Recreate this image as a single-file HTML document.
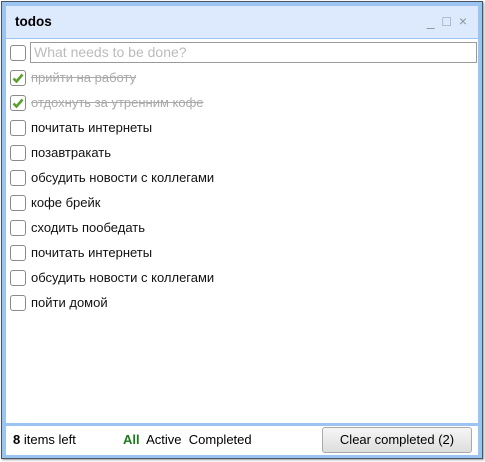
<!DOCTYPE html>
<html><head><meta charset="utf-8"><style>
body{margin:0;width:485px;height:462px;background:#fff;font-family:"Liberation Sans",Arial,sans-serif;position:relative;overflow:hidden}
.win{position:absolute;left:1px;top:1px;width:480px;height:456px;border:1px solid #4a5563;background:#9cc4f2;box-shadow:1px 1px 2px rgba(0,0,0,.4)}
.title{position:absolute;left:4px;top:4px;width:472px;height:32px;background:#dde9fc}
.title b{position:absolute;left:9px;top:8px;font-size:13.5px;color:#000}
.ctl{position:absolute;right:9px;top:7px;color:#8a949e;font-size:14px;letter-spacing:2px}
.content{position:absolute;left:4px;top:37px;width:472px;height:384px;background:#fff}
.footer{position:absolute;left:4px;top:424px;width:472px;height:29px;background:#fff;font-size:13px}
.cb{position:absolute;left:4px;width:14px;height:14px;border:1px solid #8a8a8a;border-radius:3px;background:#fff}
.row{position:absolute;left:0;height:20px;font-size:13px}
.row span{position:absolute;left:25px;top:2px;white-space:nowrap;color:#111}
.done span{color:#aaa;text-decoration:line-through}
.inp{position:absolute;left:24px;top:3px;width:442px;height:19px;border:1px solid #9a9a9a;font-size:14px;color:#bbb;line-height:19px;padding-left:3px;box-sizing:content-box}
.btn{position:absolute;left:316px;top:1px;width:148px;height:24px;border:1px solid #aaa;border-radius:3px;background:linear-gradient(#f6f6f6,#dedede);text-align:center;line-height:24px;font-size:13px}
</style></head><body>
<div class="win">
<div class="title"><b>todos</b><div class="ctl">_ □ ×</div></div>
<div class="content">
<div class="cb" style="top:6px"></div>
<div class="inp">What needs to be done?</div>
<div class="row done" style="top:29px"><div class="cb" style="top:2px"><svg width="14" height="14" viewBox="0 0 14 14"><path d="M2.5 7.5L5.5 10.5L11.5 3.5" stroke="#5aa02c" stroke-width="2.6" fill="none"/></svg></div><span>прийти на работу</span></div>
<div class="row done" style="top:54px"><div class="cb" style="top:2px"><svg width="14" height="14" viewBox="0 0 14 14"><path d="M2.5 7.5L5.5 10.5L11.5 3.5" stroke="#5aa02c" stroke-width="2.6" fill="none"/></svg></div><span>отдохнуть за утренним кофе</span></div>
<div class="row" style="top:79px"><div class="cb" style="top:2px"></div><span>почитать интернеты</span></div>
<div class="row" style="top:104px"><div class="cb" style="top:2px"></div><span>позавтракать</span></div>
<div class="row" style="top:129px"><div class="cb" style="top:2px"></div><span>обсудить новости с коллегами</span></div>
<div class="row" style="top:154px"><div class="cb" style="top:2px"></div><span>кофе брейк</span></div>
<div class="row" style="top:179px"><div class="cb" style="top:2px"></div><span>сходить пообедать</span></div>
<div class="row" style="top:204px"><div class="cb" style="top:2px"></div><span>почитать интернеты</span></div>
<div class="row" style="top:229px"><div class="cb" style="top:2px"></div><span>обсудить новости с коллегами</span></div>
<div class="row" style="top:254px"><div class="cb" style="top:2px"></div><span>пойти домой</span></div>
</div>
<div class="footer">
<span style="position:absolute;left:7px;top:6px"><b>8</b> items left</span>
<span style="position:absolute;left:117px;top:6px"><b style="color:#1e7a1e">All</b>&nbsp; Active&nbsp; Completed</span>
<div class="btn">Clear completed (2)</div>
</div>
</div>
</body></html>
